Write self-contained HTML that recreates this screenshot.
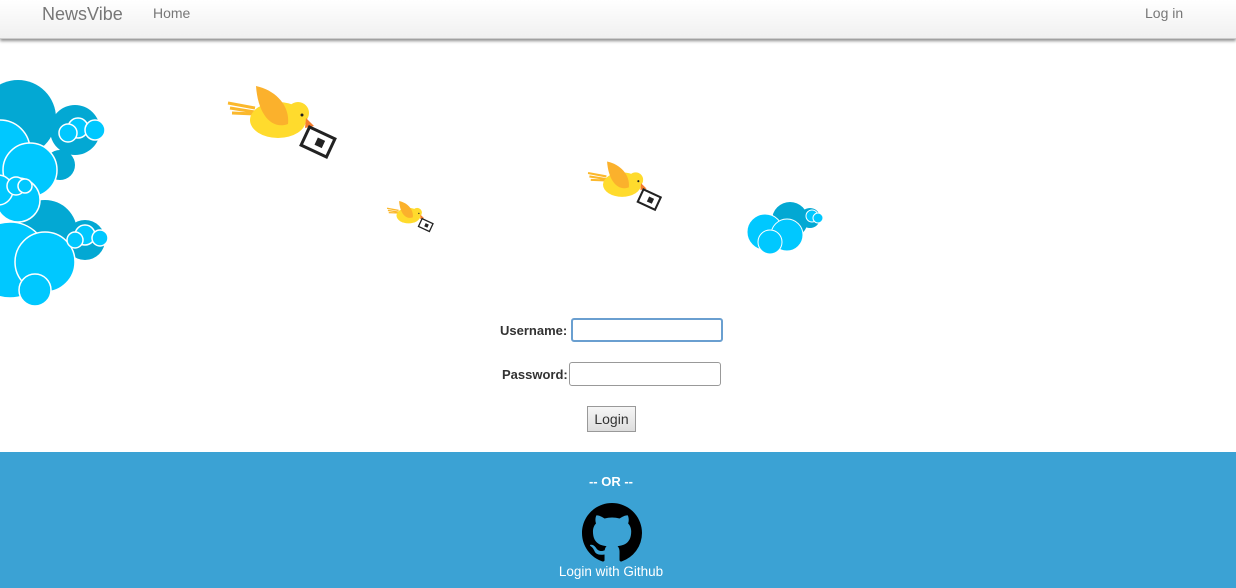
<!DOCTYPE html>
<html><head><style>
body{margin:0;width:1236px;height:588px;overflow:hidden;background:#fff;font-family:"Liberation Sans",sans-serif;position:relative}
.nav{position:absolute;top:0;left:0;width:1236px;height:38px;background:linear-gradient(#fff,#f0f0f0);border-bottom:1px solid #ccc;box-shadow:0 2px 3px rgba(0,0,0,.45);z-index:2}
.nav span{position:absolute;color:#777}
.lbl{position:absolute;font-size:13px;font-weight:bold;color:#333}
.inp{position:absolute;height:22px;border:1px solid #999;border-radius:3px;box-sizing:border-box;background:#fff}
.foot{position:absolute;top:452px;left:0;width:1236px;height:136px;background:#3ba2d4;color:#fff}
</style></head><body>
<div class="nav">
<span style="left:42px;top:4px;font-size:18px">NewsVibe</span>
<span style="left:153px;top:5px;font-size:14px">Home</span>
<span style="left:1145px;top:5px;font-size:14px">Log in</span>
</div>
<svg width="1236" height="452" style="position:absolute;top:0;left:0">
<g fill="#03a8d3">
<circle cx="18" cy="118" r="38"/><circle cx="75" cy="130" r="25"/><circle cx="60" cy="165" r="15"/>
<circle cx="45" cy="232" r="32"/><circle cx="85" cy="240" r="20"/>
</g>
<g fill="#00c8ff" stroke="#fff" stroke-width="1.5">
<circle cx="0" cy="150" r="30"/><circle cx="30" cy="170" r="27"/><circle cx="18" cy="200" r="22"/><circle cx="-2" cy="190" r="15"/>
<circle cx="78" cy="128" r="10"/><circle cx="95" cy="130" r="10"/><circle cx="68" cy="133" r="9"/>
<circle cx="10" cy="260" r="38"/><circle cx="45" cy="262" r="30"/><circle cx="35" cy="290" r="16"/>
<circle cx="85" cy="235" r="10"/><circle cx="100" cy="238" r="8"/><circle cx="75" cy="240" r="8"/>
<circle cx="16" cy="186" r="9"/><circle cx="25" cy="186" r="7"/>
</g>
<g fill="#03a8d3"><circle cx="790" cy="220" r="18"/><circle cx="810" cy="218" r="10"/></g>
<g fill="#00c8ff" stroke="#fff" stroke-width="1"><circle cx="765" cy="232" r="18"/><circle cx="787" cy="235" r="16"/><circle cx="770" cy="242" r="12"/><circle cx="812" cy="216" r="6"/><circle cx="818" cy="218" r="5"/></g>
<g id="b">
<path d="M228 103 L255 108 M230 108 L255 112 M232 113 L255 114" stroke="#fbb82c" stroke-width="3"/>
<ellipse cx="278" cy="120" rx="28" ry="18" fill="#ffdb2d"/>
<circle cx="298" cy="113" r="11" fill="#ffdb2d"/>
<circle cx="302" cy="115" r="1.5" fill="#222"/>
<path d="M256 86 C275 90 290 105 288 124 C272 130 258 115 256 86Z" fill="#fbb12c"/>
<polygon points="306,118 314,126 305,128" fill="#f57c2c"/>
<rect x="304" y="132" width="28" height="20" transform="rotate(25 318 142)" fill="#fff" stroke="#222" stroke-width="3"/>
<rect x="316" y="138" width="8" height="8" transform="rotate(25 318 142)" fill="#222"/>
</g>
<use href="#b" transform="translate(433 103) scale(0.68)"/>
<use href="#b" transform="translate(289 164) scale(0.43)"/>
</svg>
<div class="lbl" style="left:500px;top:323px">Username:</div>
<div class="inp" style="left:571px;top:318px;width:152px;height:24px;border:2px solid #6a9fd0"></div>
<div class="lbl" style="left:502px;top:367px">Password:</div>
<div class="inp" style="left:569px;top:362px;width:152px;height:24px"></div>
<div style="position:absolute;left:587px;top:406px;width:49px;height:26px;box-sizing:border-box;border:1px solid #999;background:linear-gradient(#f6f6f6,#ddd);font-size:14px;color:#333;text-align:center;line-height:24px">Login</div>
<div class="foot">
<div style="position:absolute;top:22px;left:561px;width:100px;text-align:center;font-size:13px;font-weight:bold">-- OR --</div>
<svg style="position:absolute;left:582px;top:51px" width="60" height="60" viewBox="0 0 16 16"><path fill="#000" d="M8 0C3.58 0 0 3.580 0 8c0 3.54 2.29 6.53 5.47 7.59.4.07.55-.17.55-.38 0-.19-.01-.82-.01-1.49-2.01.37-2.530-.49-2.69-.94-.09-.23-.48-.94-.82-1.13-.28-.15-.68-.52-.01-.53.63-.01 1.08.58 1.23.82.72 1.21 1.87.87 2.33.66.07-.52.28-.87.51-1.07-1.78-.2-3.64-.89-3.64-3.95 0-.87.31-1.59.82-2.15-.08-.2-.36-1.02.08-2.12 0 0 .67-.21 2.2.82.64-.18 1.32-.27 2-.27.68 0 1.36.09 2 .27 1.53-1.04 2.2-.82 2.2-.82.44 1.1.16 1.920.08 2.12.51.56.82 1.27.82 2.15 0 3.07-1.87 3.75-3.65 3.95.29.25.54.73.54 1.48 0 1.07-.01 1.93-.01 2.2 0 .21.15.46.55.38A8.013 8.013 0 0016 8c0-4.42-3.58-8-8-8z"/></svg>
<div style="position:absolute;top:112px;left:541px;width:140px;text-align:center;font-size:13.5px">Login with Github</div>
</div>
</body></html>
